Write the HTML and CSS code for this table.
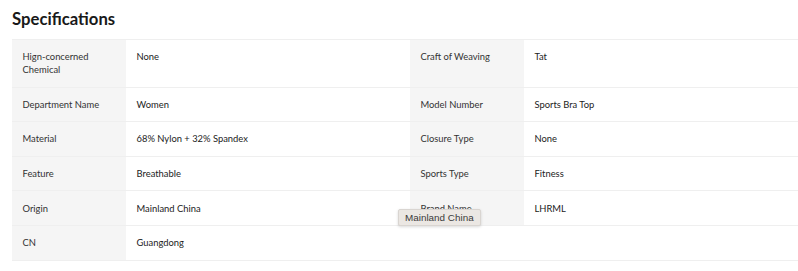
FILE: index.html
```html
<!DOCTYPE html>
<html>
<head>
<meta charset="utf-8">
<link rel="stylesheet" href="styles.css">
</head>
<body>
<div class="specs">
  <h2 class="title">Specifications</h2>
  <div class="table">
    <div class="row">
      <div class="label">Hign-concerned<br>Chemical</div>
      <div class="value">None</div>
      <div class="label">Craft of Weaving</div>
      <div class="value">Tat</div>
    </div>
    <div class="row">
      <div class="label">Department Name</div>
      <div class="value">Women</div>
      <div class="label">Model Number</div>
      <div class="value">Sports Bra Top</div>
    </div>
    <div class="row">
      <div class="label">Material</div>
      <div class="value">68% Nylon + 32% Spandex</div>
      <div class="label">Closure Type</div>
      <div class="value">None</div>
    </div>
    <div class="row">
      <div class="label">Feature</div>
      <div class="value">Breathable</div>
      <div class="label">Sports Type</div>
      <div class="value">Fitness</div>
    </div>
    <div class="row">
      <div class="label">Origin</div>
      <div class="value">Mainland China</div>
      <div class="label">Brand Name</div>
      <div class="value">LHRML</div>
    </div>
    <div class="row">
      <div class="label">CN</div>
      <div class="value">Guangdong</div>
      <div class="empty"></div>
      <div class="empty"></div>
    </div>
  </div>
  <div class="tooltip">Mainland China</div>
</div>
</body>
</html>
```
FILE: styles.css
```css
html, body {
  margin: 0;
  padding: 0;
  background: #ffffff;
  overflow: hidden;
}
body {
  font-family: "Lato", "Noto Sans", sans-serif;
  color: #222222;
}
.specs {
  position: relative;
  padding: 0 0 0 12px;
  width: 786px;
}
.title {
  margin: 0;
  padding-top: 9px;
  height: 39px;
  font-size: 16.7px;
  line-height: 20px;
  font-weight: 700;
  color: #191919;
  box-sizing: border-box;
}
.table {
  border-top: 1px solid #efefef;
}
.row {
  display: grid;
  grid-template-columns: 114px 284px 114px 1fr;
  border-bottom: 1px solid #efefef;
}
.label, .value {
  font-size: 9.4px;
  line-height: 13px;
  padding: 10.3px 10px 10.3px 10.5px;
}
.label {
  background: #f5f5f5;
  color: #333333;
}
.value {
  color: #222222;
}
.tooltip {
  position: absolute;
  left: 398px;
  top: 209px;
  padding: 1px 6px;
  font-family: "Liberation Sans", "DejaVu Sans", sans-serif;
  font-size: 9.9px;
  line-height: 13px;
  color: #3a3a3a;
  background: #ebe7e3;
  border: 1px solid #d9d5d1;
  border-radius: 2px;
  box-shadow: 0 1px 3px rgba(0,0,0,0.15);
}
```
